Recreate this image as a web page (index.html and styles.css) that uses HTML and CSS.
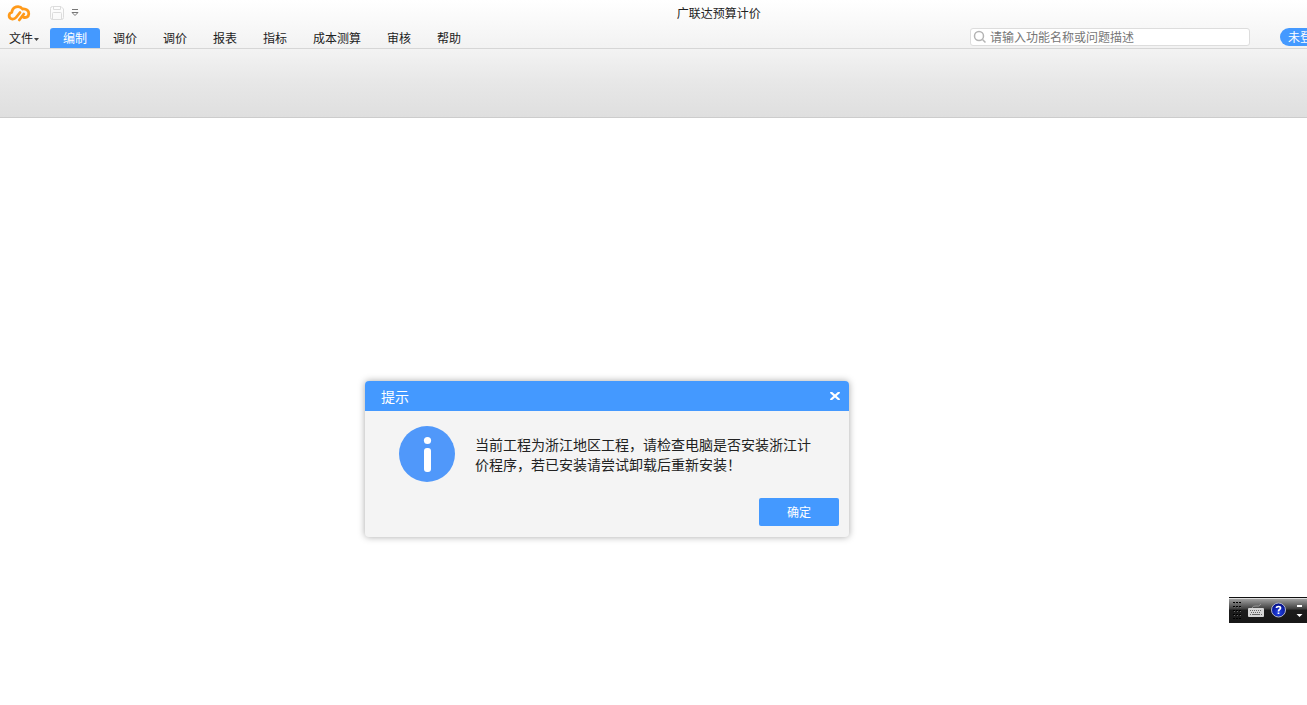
FILE: index.html
```html
<!DOCTYPE html>
<html lang="zh-CN">
<head>
<meta charset="utf-8">
<title>广联达预算计价</title>
<link rel="stylesheet" href="styles.css">
</head>
<body>
<div class="app">
  <header class="header">
    <div class="titlebar">
      <svg class="logo" width="24" height="18" viewBox="0 0 24 18" fill="none" stroke="#ff9a1a" stroke-width="2.800" stroke-linecap="round" stroke-linejoin="round" aria-hidden="true">
        <path d="M13 8.500 L9 13.500 Q7.500 15.300 5 15 C1.200 14.200 1.200 9.200 4.800 8.500 C5.300 2.300 12.500 .8 15.500 5 C19.500 4.500 22 7 21.800 9.800 C21.600 12.800 19 14 16.500 13.300 M12.300 16 L16.800 10"/>
      </svg>
      <button class="quick" type="button" aria-label="保存">
        <svg width="14" height="14" viewBox="0 0 14 14" fill="none" stroke="#dcdcdc" aria-hidden="true">
          <path d="M.5 2.500 Q.5 .5 2.500 .5 H11 L13.500 3 V11.500 Q13.500 13.500 11.500 13.500 H2.500 Q.5 13.500 .5 11.500 Z M3.500 .5 V3.500 H10.500 V.5 M2.500 13.500 V7.500 Q2.500 6.500 3.500 6.500 H10.500 Q11.500 6.500 11.500 7.500 V13.500"/>
        </svg>
      </button>
      <button class="quick" type="button" aria-label="自定义快速访问工具栏">
        <svg width="8" height="8" viewBox="0 0 8 8" fill="none" stroke="#777" aria-hidden="true"><path d="M1 .5 H7 M1 3.500 H7 L4 6.500 Z"/></svg>
      </button>
      <h1 class="title">广联达预算计价</h1>
    </div>
    <div class="menubar">
      <nav class="tabs">
        <button class="tab file" type="button">文件<svg width="5" height="3" viewBox="0 0 5 3" aria-hidden="true"><path d="M0 0H5L2.500 3Z" fill="#444"/></svg></button>
        <button class="tab active" type="button">编制</button>
        <button class="tab" type="button">调价</button>
        <button class="tab" type="button">调价</button>
        <button class="tab" type="button">报表</button>
        <button class="tab" type="button">指标</button>
        <button class="tab" type="button">成本测算</button>
        <button class="tab" type="button">审核</button>
        <button class="tab" type="button">帮助</button>
      </nav>
      <label class="search">
        <svg width="14" height="14" viewBox="0 0 14 14" fill="none" stroke="#b4b4b4" stroke-width="1.500" aria-hidden="true"><circle cx="6" cy="6" r="4.500"/><path d="M9.500 9.500 L12.500 12.500"/></svg>
        <input class="search-input" type="text" placeholder="请输入功能名称或问题描述" aria-label="搜索功能">
      </label>
      <div class="account"><button class="login" type="button">未登录</button></div>
    </div>
  </header>
  <div class="ribbon"></div>
  <main class="workspace"></main>

  <section class="dialog" role="dialog" aria-labelledby="dialog-title">
    <div class="dialog-head">
      <h2 class="dialog-title" id="dialog-title">提示</h2>
      <button class="close" type="button" aria-label="关闭">
        <svg width="10" height="8" viewBox="0 0 10 8" stroke="#fff" stroke-width="2.200" aria-hidden="true"><path d="M.5 0 L9.500 8 M9.500 0 L.5 8"/></svg>
      </button>
    </div>
    <div class="dialog-body">
      <svg class="info" width="56" height="56" viewBox="0 0 56 56" aria-hidden="true">
        <circle cx="28" cy="28" r="28" fill="#5098fa"/>
        <circle cx="28.500" cy="14.500" r="3.600" fill="#fff"/>
        <rect x="25" y="22" width="7" height="24" rx="3" fill="#fff"/>
      </svg>
      <p class="message">当前工程为浙江地区工程，请检查电脑是否安装浙江计价程序，若已安装请尝试卸载后重新安装！</p>
    </div>
    <div class="dialog-foot"><button class="ok" type="button">确定</button></div>
  </section>

  <aside class="langbar" aria-label="语言栏">
    <svg width="78" height="26" viewBox="0 0 78 26" aria-hidden="true">
      <defs>
        <linearGradient id="bar" x1="0" y1="0" x2="0" y2="1">
          <stop offset="0" stop-color="#a0a0a0"/><stop offset=".42" stop-color="#3c3c3c"/><stop offset=".46" stop-color="#1c1c1c"/><stop offset="1" stop-color="#171717"/>
        </linearGradient>
        <radialGradient id="ball" cx=".5" cy=".7" r=".7">
          <stop offset="0" stop-color="#2244e8"/><stop offset="1" stop-color="#000a80"/>
        </radialGradient>
      </defs>
      <rect width="78" height="26" fill="#111"/>
      <rect y="1" width="78" height="1" fill="#ddd"/>
      <rect y="2" width="78" height="24" fill="url(#bar)"/>
      <path d="M4 5.500H12M4 9.500H12M4 13.500H12M4 17.500H12M4 21.500H12" stroke="#000" stroke-dasharray="2 1"/>
      <path d="M5 6.500H13M5 10.500H13M5 14.500H13M5 18.500H13" stroke="#666" stroke-dasharray="1 2"/>
      <path d="M23 11 Q24 8.500 27 9 Q30 10 32 7" fill="none" stroke="#999"/>
      <rect x="19" y="11" width="16" height="9" rx="1" fill="#d6d6d6"/>
      <path d="M21 13.500H33M22 15.500H32" stroke="#666" stroke-dasharray="1 1"/>
      <path d="M21 17.500H33" stroke="#666" stroke-dasharray="1 1 8 1"/>
      <circle cx="49.500" cy="13" r="7" fill="url(#ball)" stroke="#b4b8cc"/>
      <path d="M47.500 11 Q47.500 9.500 49.500 9.500 Q51.500 9.500 51.500 11 Q51.500 12 50.300 12.700 Q49.500 13.300 49.500 14.500 M49.500 15.500 V17" fill="none" stroke="#fff" stroke-width="1.700"/>
      <path d="M68 8H73V10H68Z M67.500 17H73.500L70.500 20Z" fill="#fff"/>
    </svg>
  </aside>
</div>
</body>
</html>
```
FILE: styles.css
```css
* { box-sizing: border-box; }

body {
  margin: 0;
  overflow: hidden;
  background: #fff;
  color: #222;
  font: 12px/20px "Liberation Sans", "Noto Sans CJK SC", sans-serif;
}

button, input { font: inherit; color: inherit; }
button { padding: 0; border: 0; background: none; }
svg { display: block; flex: none; }

.app {
  position: relative;
  display: flex;
  flex-direction: column;
  min-height: 100vh;
}

.header {
  border-bottom: 1px solid #d6d6d6;
  background: linear-gradient(#fff, #f2f2f2);
}

.titlebar {
  position: relative;
  display: flex;
  align-items: center;
  height: 28px;
  padding: 0 0 3px 7px;
}

.logo { margin-right: 19px; }
.quick { margin-right: 7px; }

.title {
  position: absolute;
  top: 4px;
  left: 55%;
  margin: 0;
  font-size: 12px;
  font-weight: 400;
  transform: translateX(-50%);
}

.menubar { display: flex; height: 20px; }
.tabs { display: flex; }

.tab {
  padding: 2px 13px 0;
  border-radius: 3px 3px 0 0;
  line-height: 18px;
}

.file {
  display: flex;
  align-items: center;
  gap: 1px;
  width: 50px;
  padding: 2px 0 0 9px;
}

.active { background: #4499ff; color: #fff; }

.search {
  display: flex;
  align-items: center;
  width: 280px;
  height: 18px;
  margin-left: auto;
  padding: 0 3px 0 2px;
  border: 1px solid #ddd;
  border-radius: 3px;
  background: #fff;
}

.search-input {
  flex: 1;
  min-width: 0;
  height: 16px;
  padding: 1px 3px 0;
  border: 0;
  outline: 0;
  background: none;
}

.search-input::placeholder { color: #777; opacity: 1; }

.account {
  width: 27px;
  margin-left: 30px;
  overflow: hidden;
}

.login {
  display: block;
  width: 52px;
  height: 18px;
  padding-top: 2px;
  border-radius: 9px;
  background: #4499ff;
  color: #fff;
  line-height: 16px;
}

.ribbon {
  height: 69px;
  border-bottom: 1px solid #ccc;
  background: linear-gradient(#f3f3f3, #e7e7e7 50%, #dfdfdf);
}

.workspace { flex: 1; }

.dialog {
  position: absolute;
  top: 381px;
  left: 365px;
  width: 484px;
  border-radius: 4px;
  background: #f4f4f4;
  box-shadow: 0 0 7px rgba(0, 0, 0, .35);
}

.dialog-head {
  display: flex;
  align-items: center;
  justify-content: space-between;
  height: 30px;
  padding: 0 9px 0 16px;
  border-radius: 4px 4px 0 0;
  background: #4499ff;
  color: #fff;
}

.dialog-title {
  margin: 0;
  padding-top: 2px;
  font-size: 14px;
  font-weight: 400;
}

.dialog-body {
  display: flex;
  gap: 20px;
  padding: 15px 34px 0;
}

.message {
  margin: 0;
  padding-top: 9px;
  font-size: 14px;
  line-height: 20px;
}

.dialog-foot {
  display: flex;
  justify-content: flex-end;
  padding: 16px 10px 11px;
}

.ok {
  width: 80px;
  height: 28px;
  padding-top: 2px;
  border-radius: 2px;
  background: #4499ff;
  color: #fff;
}

.langbar {
  position: absolute;
  top: 597px;
  right: 0;
}
```
